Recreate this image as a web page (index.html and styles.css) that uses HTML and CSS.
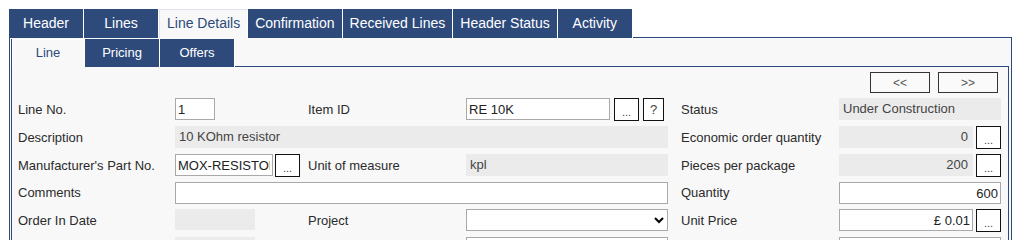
FILE: index.html
```html
<!DOCTYPE html>
<html lang="en">
<head>
  <meta charset="UTF-8" />
  <title>Line Details</title>
  <link rel="stylesheet" href="styles.css">
</head>
<body>
  <div class="page">
    <div class="tabs">
      <a class="tab" href="#">Header</a>
      <a class="tab" href="#">Lines</a>
      <a class="tab active" href="#">Line Details</a>
      <a class="tab" href="#">Confirmation</a>
      <a class="tab" href="#">Received Lines</a>
      <a class="tab" href="#">Header Status</a>
      <a class="tab" href="#">Activity</a>
    </div>

    <div class="panel">
      <div class="subtabs">
        <a class="subtab active" href="#">Line</a>
        <a class="subtab" href="#">Pricing</a>
        <a class="subtab" href="#">Offers</a>
      </div>

      <div class="subpanel">
        <div class="pager">
          <button class="nav-btn">&lt;&lt;</button>
          <button class="nav-btn">&gt;&gt;</button>
        </div>

        <div class="form">
          <!-- row 1 -->
          <label class="lbl">Line No.</label>
          <div class="field"><input class="inp w-line" type="text" value="1"></div>
          <label class="lbl">Item ID</label>
          <div class="field">
            <input class="inp w-item" type="text" value="RE 10K">
            <button class="btn">...</button>
            <button class="btn q">?</button>
          </div>
          <label class="lbl right">Status</label>
          <div class="ro">Under Construction</div>

          <!-- row 2 -->
          <label class="lbl">Description</label>
          <div class="ro span3">10 KOhm resistor</div>
          <label class="lbl right">Economic order quantity</label>
          <div class="field gap3">
            <div class="ro num grow">0</div>
            <button class="btn">...</button>
          </div>

          <!-- row 3 -->
          <label class="lbl">Manufacturer's Part No.</label>
          <div class="field gap2">
            <input class="inp w-part" type="text" value="MOX-RESISTOR">
            <button class="btn">...</button>
          </div>
          <label class="lbl">Unit of measure</label>
          <div class="ro">kpl</div>
          <label class="lbl right">Pieces per package</label>
          <div class="field gap3">
            <div class="ro num grow">200</div>
            <button class="btn">...</button>
          </div>

          <!-- row 4 -->
          <label class="lbl">Comments</label>
          <div class="field span3"><input class="inp grow" type="text" value=""></div>
          <label class="lbl right">Quantity</label>
          <div class="field"><input class="inp grow num" type="text" value="600"></div>

          <!-- row 5 -->
          <label class="lbl">Order In Date</label>
          <div class="field"><div class="ro w-date"></div></div>
          <label class="lbl">Project</label>
          <div class="field">
            <select class="sel grow">
              <option></option>
            </select>
          </div>
          <label class="lbl right">Unit Price</label>
          <div class="field gap3">
            <input class="inp grow num" type="text" value="£ 0.01">
            <button class="btn">...</button>
          </div>

          <!-- row 6, runs below the visible area -->
          <label class="lbl"></label>
          <div class="field"><div class="ro w-date"></div></div>
          <label class="lbl"></label>
          <div class="field"><input class="inp grow" type="text" value=""></div>
          <label class="lbl right"></label>
          <div class="field"><input class="inp grow num" type="text" value=""></div>
        </div>
      </div>
    </div>
  </div>
</body>
</html>
```

FILE: styles.css
```css
* {
  box-sizing: border-box;
}

body {
  margin: 0;
  background: #fff;
  font-family: "Liberation Sans", Arial, sans-serif;
  color: #2b2b2b;
}

.page {
  padding: 9px 8px 0 9px;
}

/* top tabs */
.tabs {
  display: flex;
  height: 29px;
  margin-bottom: -1px;
}

.tab {
  position: relative;
  min-width: 75px;
  height: 29px;
  padding: 0 7px;
  line-height: 28px;
  font-size: 14px;
  text-align: center;
  text-decoration: none;
  color: #fff;
  background: #2d4a7b;
  border-right: 1px solid #fff;
}

.tab.active {
  z-index: 1;
  color: #2d4a7b;
  background: #f8f8f8;
  border-left: 1px solid #dfe3ea;
  border-top: 1px solid #dfe3ea;
  line-height: 27px;
}

.panel {
  background: #f8f8f8;
  border: 1px solid #2d4a7b;
  border-bottom: none;
  padding: 1px 2px 0 1px;
  height: 210px;
}

/* inner tabs */
.subtabs {
  display: flex;
  height: 28px;
  margin-bottom: -1px;
}

.subtab {
  position: relative;
  width: 75px;
  height: 28px;
  line-height: 27px;
  font-size: 13px;
  text-align: center;
  text-decoration: none;
  color: #fff;
  background: #2d4a7b;
  border-right: 1px solid #fff;
}

.subtab.active {
  z-index: 1;
  width: 74px;
  color: #2d4a7b;
  background: #f8f8f8;
  border-left: 1px solid #2d4a7b;
  box-shadow: inset 1px 1px 0 #fff;
}

.subpanel {
  background: #f8f8f8;
  border: 1px solid #2d4a7b;
  border-bottom: none;
  padding: 5px 7px 0 6px;
  height: 200px;
}

.pager {
  display: flex;
  justify-content: flex-end;
  gap: 8px;
  padding-right: 3px;
  margin-bottom: 5px;
}

.nav-btn {
  width: 60px;
  height: 21px;
  padding: 0;
  font-family: inherit;
  font-size: 12px;
  color: #555;
  background: #fafafa;
  border: 1px solid #333;
}

/* form grid */
.form {
  display: grid;
  grid-template-columns: 157px 133px 158px 202px 171px 162px;
  grid-template-rows: 22px 22px 22px 21px 22px 22px;
  row-gap: 6px;
  font-size: 13px;
}

.lbl {
  display: flex;
  align-items: center;
  white-space: nowrap;
}

.lbl.right {
  padding-left: 13px;
}

.field {
  display: flex;
  align-items: flex-start;
  gap: 4px;
}

.field.gap2 {
  gap: 2px;
}

.field.gap3 {
  gap: 3px;
}

.span3 {
  grid-column: span 3;
}

.grow {
  flex: 1;
  min-width: 0;
}

.ro {
  height: 22px;
  line-height: 22px;
  padding: 0 4px;
  color: #444;
  background: #ebebeb;
  overflow: hidden;
  white-space: nowrap;
}

.inp {
  height: 22px;
  padding: 0 2px;
  font-family: inherit;
  font-size: 13px;
  color: #222;
  background: #fff;
  border: 1px solid #a9a9a9;
  outline: none;
}

.num {
  text-align: right;
}

.ro.num {
  padding-right: 5px;
}

.w-line {
  width: 40px;
}

.w-item {
  width: 144px;
}

.w-part {
  width: 98px;
}

.w-date {
  width: 80px;
  height: 21px;
}

.sel {
  height: 22px;
  font-family: inherit;
  font-size: 13px;
  background: #fff;
  border: 1px solid #a9a9a9;
  border-radius: 0;
}

.btn {
  width: 25px;
  height: 23px;
  padding: 0 0 2px;
  font-family: inherit;
  font-size: 11px;
  line-height: 1;
  color: #444;
  background: #fff;
  border: 1px solid #111;
  display: flex;
  align-items: flex-end;
  justify-content: center;
  flex: none;
}

.btn.q {
  width: 21px;
  font-size: 13px;
  align-items: center;
  padding: 0;
}
```
